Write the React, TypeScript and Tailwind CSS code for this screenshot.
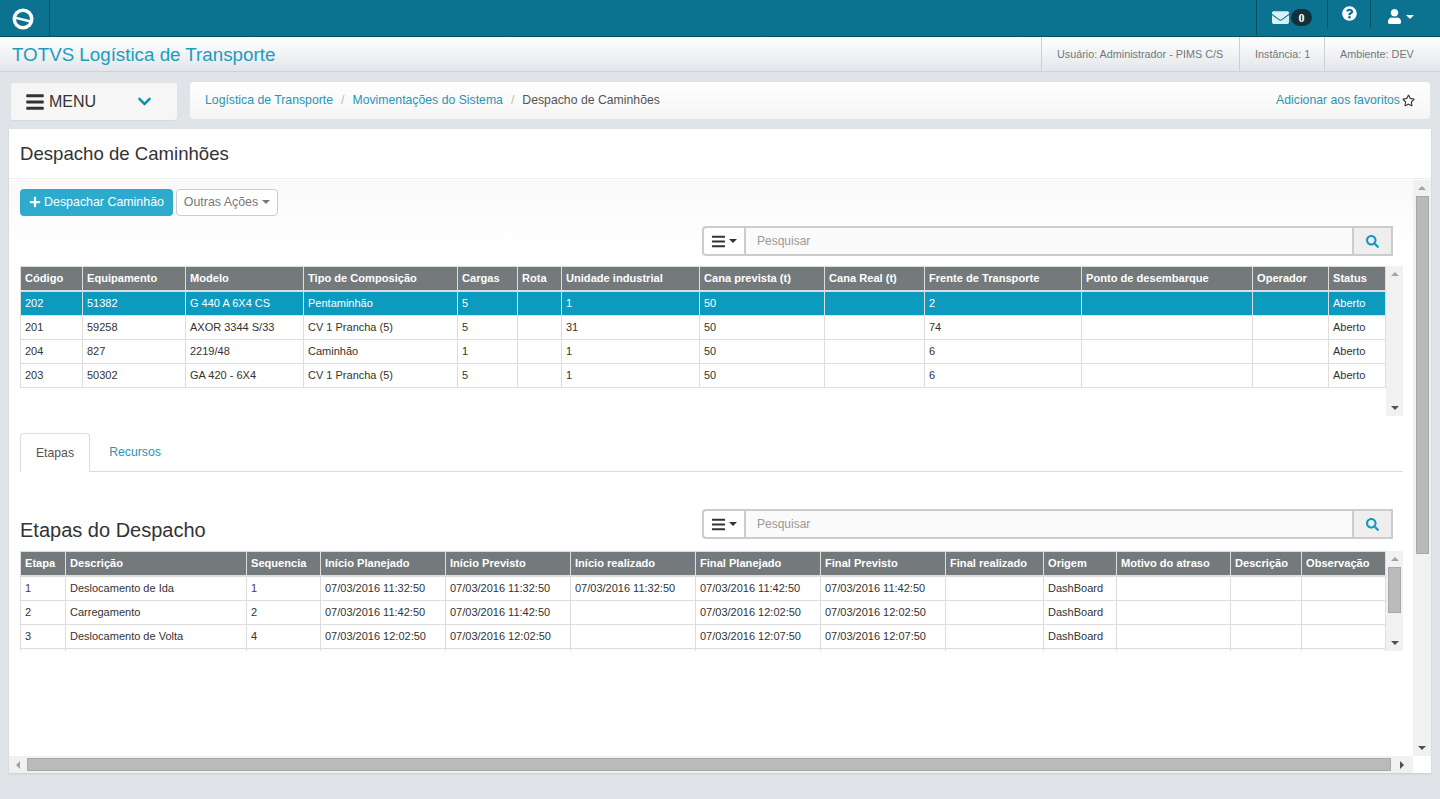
import { FaBars, FaChevronDown, FaEnvelope, FaPlus, FaQuestionCircle, FaRegStar, FaSearch, FaUser } from "react-icons/fa";

const despachoCols = [63, 103, 118, 154, 60, 44, 138, 125, 100, 157, 171, 76, 57];
const despachoHead = ["Código", "Equipamento", "Modelo", "Tipo de Composição", "Cargas", "Rota", "Unidade industrial", "Cana prevista (t)", "Cana Real (t)", "Frente de Transporte", "Ponto de desembarque", "Operador", "Status"];
const despachoRows = [
  ["202", "51382", "G 440 A 6X4 CS", "Pentaminhão", "5", "", "1", "50", "", "2", "", "", "Aberto"],
  ["201", "59258", "AXOR 3344 S/33", "CV 1 Prancha (5)", "5", "", "31", "50", "", "74", "", "", "Aberto"],
  ["204", "827", "2219/48", "Caminhão", "1", "", "1", "50", "", "6", "", "", "Aberto"],
  ["203", "50302", "GA 420 - 6X4", "CV 1 Prancha (5)", "5", "", "1", "50", "", "6", "", "", "Aberto"],
];

const etapasCols = [46, 181, 74, 125, 125, 125, 125, 125, 98, 73, 114, 71, 84];
const etapasHead = ["Etapa", "Descrição", "Sequencia", "Início Planejado", "Início Previsto", "Início realizado", "Final Planejado", "Final Previsto", "Final realizado", "Origem", "Motivo do atraso", "Descrição", "Observação"];
const etapasRows = [
  ["1", "Deslocamento de Ida", "1", "07/03/2016 11:32:50", "07/03/2016 11:32:50", "07/03/2016 11:32:50", "07/03/2016 11:42:50", "07/03/2016 11:42:50", "", "DashBoard", "", "", ""],
  ["2", "Carregamento", "2", "07/03/2016 11:42:50", "07/03/2016 11:42:50", "", "07/03/2016 12:02:50", "07/03/2016 12:02:50", "", "DashBoard", "", "", ""],
  ["3", "Deslocamento de Volta", "4", "07/03/2016 12:02:50", "07/03/2016 12:02:50", "", "07/03/2016 12:07:50", "07/03/2016 12:07:50", "", "DashBoard", "", "", ""],
  ["", "", "", "", "", "", "", "", "", "", "", "", ""],
];

function Logo() {
  return (
    <svg className="w-[22px] h-[22px]" viewBox="0 0 22 22">
      <circle cx="11" cy="11" r="10.5" fill="#fff" />
      <circle cx="11" cy="11" r="7" fill="#0b7290" />
      <path d="M3 8.4 L19 12.2 L18.5 14.8 L3.5 11 Z" fill="#fff" />
    </svg>
  );
}

function Caret({ className }: { className: string }) {
  return <span className={`inline-block w-0 h-0 border-x-[4px] border-x-transparent border-t-[4px] ${className}`} />;
}

function SearchBar() {
  return (
    <div className="flex h-[30px] w-[691px] text-[12px]">
      <button className="w-[42px] flex items-center justify-center gap-[3px] bg-white border-2 border-r-0 border-[#ccc] rounded-l-[4px] text-[#333]">
        <FaBars className="text-[15px]" />
        <Caret className="border-t-[#333]" />
      </button>
      <div className="flex-1 flex items-center pl-[11px] bg-[#fafafa] border-2 border-[#ccc] text-[#999]">Pesquisar</div>
      <button className="w-[39px] flex items-center justify-center bg-[#eee] border-2 border-l-0 border-[#ccc] text-[#0f9ac0]">
        <FaSearch className="text-[13px]" />
      </button>
    </div>
  );
}

function DataTable({ cols, head, rows, selected }: { cols: number[]; head: string[]; rows: string[][]; selected?: number }) {
  return (
    <table className="self-start table-fixed border-separate border-spacing-0 text-[11px] leading-[14px]">
      <colgroup>
        {cols.map((w, i) => (
          <col key={i} style={{ width: w }} />
        ))}
      </colgroup>
      <thead>
        <tr>
          {head.map((h, i) => (
            <th
              key={i}
              className="h-[26px] px-[4px] pb-[1px] text-left text-[11.1px] font-bold whitespace-nowrap overflow-hidden text-white bg-[#747a7c] border-t border-b-2 border-r border-[#ddd] first:border-l"
            >
              {h}
            </th>
          ))}
        </tr>
      </thead>
      <tbody>
        {rows.map((r, ri) => (
          <tr key={ri}>
            {r.map((c, ci) => (
              <td
                key={ci}
                className={`h-[24px] px-[4px] pb-[1px] whitespace-nowrap overflow-hidden border-b border-r border-[#ddd] first:border-l ${
                  ri === selected ? "bg-[#0c9bbf] text-white" : c === "1" && selected === undefined && ri === 0 ? "bg-white text-[#5c2a6e]" : "bg-white text-[#333]"
                }`}
              >
                {c}
              </td>
            ))}
          </tr>
        ))}
      </tbody>
    </table>
  );
}

function Arrow({ dir }: { dir: "up" | "down" | "left" | "right" }) {
  if (dir === "up") return <span className="w-0 h-0 border-x-[4px] border-x-transparent border-b-[4px] border-b-[#a3a3a3]" />;
  if (dir === "down") return <span className="w-0 h-0 border-x-[4px] border-x-transparent border-t-[4px] border-t-[#505050]" />;
  if (dir === "left") return <span className="w-0 h-0 border-y-[4px] border-y-transparent border-r-[4px] border-r-[#a3a3a3]" />;
  return <span className="w-0 h-0 border-y-[4px] border-y-transparent border-l-[4px] border-l-[#505050]" />;
}

function VScroll({ thumb, wide }: { thumb: number; wide?: boolean }) {
  return (
    <div className={`${wide ? "w-[18px]" : "w-[17px]"} shrink-0 h-full flex flex-col items-center bg-[#f1f1f1]`}>
      <div className="h-[16px] shrink-0 flex items-center justify-center"><Arrow dir="up" /></div>
      <div className="flex-1 w-full flex justify-center">
        <div className="w-[13px] bg-[#bababa] border border-[#a8a8a8]" style={{ height: thumb }} />
      </div>
      <div className="h-[16px] shrink-0 flex items-center justify-center"><Arrow dir="down" /></div>
    </div>
  );
}

export default function App() {
  return (
    <div className="h-[799px] overflow-hidden flex flex-col bg-[#e0e4e8] font-['Liberation_Sans',Arial,sans-serif] text-[#333]">
      {/* top bar */}
      <header className="h-[37px] shrink-0 flex justify-between bg-[#0b7290] border-b border-[#074f63]">
        <div className="w-[50px] h-[36px] flex items-center pl-[12px] pt-[2px] border-r border-[#074f63]">
          <Logo />
        </div>
        <div className="flex h-[35px] text-white">
          <div className="w-[71px] flex items-center pl-[15px] border-l border-[#074f63]">
            <FaEnvelope className="text-[17px] text-[#d9f0f6]" />
            <span className="ml-[2px] w-[21px] h-[17px] rounded-full bg-[#12303a] flex items-center justify-center text-[12px] font-bold font-['Liberation_Serif',serif]">0</span>
          </div>
          <div className="w-[44px] h-[28px] flex items-center justify-center pb-[1px] border-x border-[#074f63]">
            <FaQuestionCircle className="text-[15px]" />
          </div>
          <div className="w-[69px] flex items-center pl-[16px] pb-[2px] gap-[4px]">
            <FaUser className="text-[15px]" />
            <Caret className="border-t-white" />
          </div>
        </div>
      </header>

      {/* title bar */}
      <div className="h-[35px] shrink-0 flex justify-between bg-gradient-to-b from-white to-[#e3e6ea] border-b border-[#cdd1d8]">
        <div className="pl-[12px] pt-[2px] flex items-center text-[18.75px] text-[#1c9cc0]">TOTVS Logística de Transporte</div>
        <div className="flex text-[10.8px] text-[#71787c]">
          <div className="w-[198px] flex items-center pl-[15px] border-l border-[#ccd0d4]">Usuário: Administrador - PIMS C/S</div>
          <div className="w-[85px] flex items-center pl-[15px] border-l border-[#ccd0d4]">Instância: 1</div>
          <div className="w-[116px] flex items-center pl-[15px] border-l border-[#ccd0d4]">Ambiente: DEV</div>
        </div>
      </div>

      {/* menu + breadcrumb */}
      <div className="flex pt-[10px] pl-[11px] pr-[10px] h-[57px] shrink-0">
        <div className="mt-[1px] w-[166px] h-[37px] flex items-center pl-[14px] bg-[#f6f6f6] rounded-[2px] shadow-[0_1px_1px_#d5d8dc]">
          <FaBars className="text-[20px] text-[#333]" />
          <span className="ml-[4px] text-[16px] text-[#333]">MENU</span>
          <FaChevronDown className="ml-[41px] text-[15px] text-[#0f8cb0]" />
        </div>
        <div className="ml-[13px] flex-1 h-[37px] flex items-center justify-between pl-[15px] pr-[15px] pb-[1px] text-[12.25px] bg-gradient-to-b from-white to-[#f5f5f5] rounded-[4px]">
          <div className="flex">
            <span className="text-[#2a95b5]">Logística de Transporte</span>
            <span className="px-[8px] text-[#bbb]">/</span>
            <span className="text-[#2a95b5]">Movimentações do Sistema</span>
            <span className="px-[8px] text-[#bbb]">/</span>
            <span className="text-[#555]">Despacho de Caminhões</span>
          </div>
          <div className="flex items-center gap-[2px] text-[#2a95b5]">
            Adicionar aos favoritos
            <FaRegStar className="text-[13px] text-[#333]" />
          </div>
        </div>
      </div>

      {/* main panel */}
      <main className="ml-[9px] mr-[9px] h-[644px] shrink-0 flex flex-col bg-white shadow-[0_1px_2px_#c8ccd0]">
        <div className="h-[50px] shrink-0 flex items-center pl-[11px] text-[18.6px] text-[#333] border-b border-[#eee]">Despacho de Caminhões</div>

        <div className="flex-1 min-h-0 flex pt-[1px]">
          <div className="flex-1 min-w-0 pl-[11px] pt-[9px] bg-[linear-gradient(#f9f9f9,#fff_70px)] overflow-hidden">
            <div className="flex gap-[3px] h-[27px] text-[12.4px]">
              <button className="w-[153px] pb-[1px] flex items-center justify-center gap-[3px] bg-[#2eabcc] text-white rounded-[4px]">
                <FaPlus className="text-[12px]" />
                Despachar Caminhão
              </button>
              <button className="w-[102px] pb-[1px] flex items-center justify-center gap-[4px] bg-white border border-[#ccc] rounded-[4px] text-[#777]">
                Outras Ações
                <Caret className="border-t-[#777]" />
              </button>
            </div>

            <div className="mt-[10px] ml-[682px]">
              <SearchBar />
            </div>

            <div className="mt-[10px] flex h-[150px] w-[1383px]">
              <DataTable cols={despachoCols} head={despachoHead} rows={despachoRows} selected={0} />
              <div className="h-full w-[17px] shrink-0 flex flex-col items-center justify-between py-[6px] bg-[#f1f1f1]">
                <Arrow dir="up" />
                <Arrow dir="down" />
              </div>
            </div>

            {/* tabs */}
            <div className="mt-[17px] w-[1383px] h-[39px] flex border-b border-[#ddd] text-[12.25px]">
              <div className="w-[70px] h-[39px] flex items-center justify-center bg-white border border-b-0 border-[#ddd] rounded-t-[4px] text-[#555]">Etapas</div>
              <div className="w-[90px] flex items-center justify-center text-[#2a95b5]">Recursos</div>
            </div>

            <div className="mt-[37px] flex justify-between w-[1373px] h-[30px]">
              <h2 className="pt-[9px] text-[20px] leading-[24px] text-[#333]">Etapas do Despacho</h2>
              <SearchBar />
            </div>

            <div className="mt-[12px] flex h-[100px] w-[1383px] overflow-hidden">
              <DataTable cols={etapasCols} head={etapasHead} rows={etapasRows} />
              <VScroll thumb={46} />
            </div>
          </div>
          <VScroll thumb={358} wide />
        </div>

        {/* horizontal scrollbar */}
        <div className="h-[17px] shrink-0 flex items-center bg-[#f1f1f1] mr-[18px]">
          <div className="w-[18px] flex justify-center"><Arrow dir="left" /></div>
          <div className="w-[1364px] h-[13px] bg-[#bababa] border border-[#a8a8a8]" />
          <div className="flex-1 flex justify-center"><Arrow dir="right" /></div>
        </div>
      </main>
    </div>
  );
}
